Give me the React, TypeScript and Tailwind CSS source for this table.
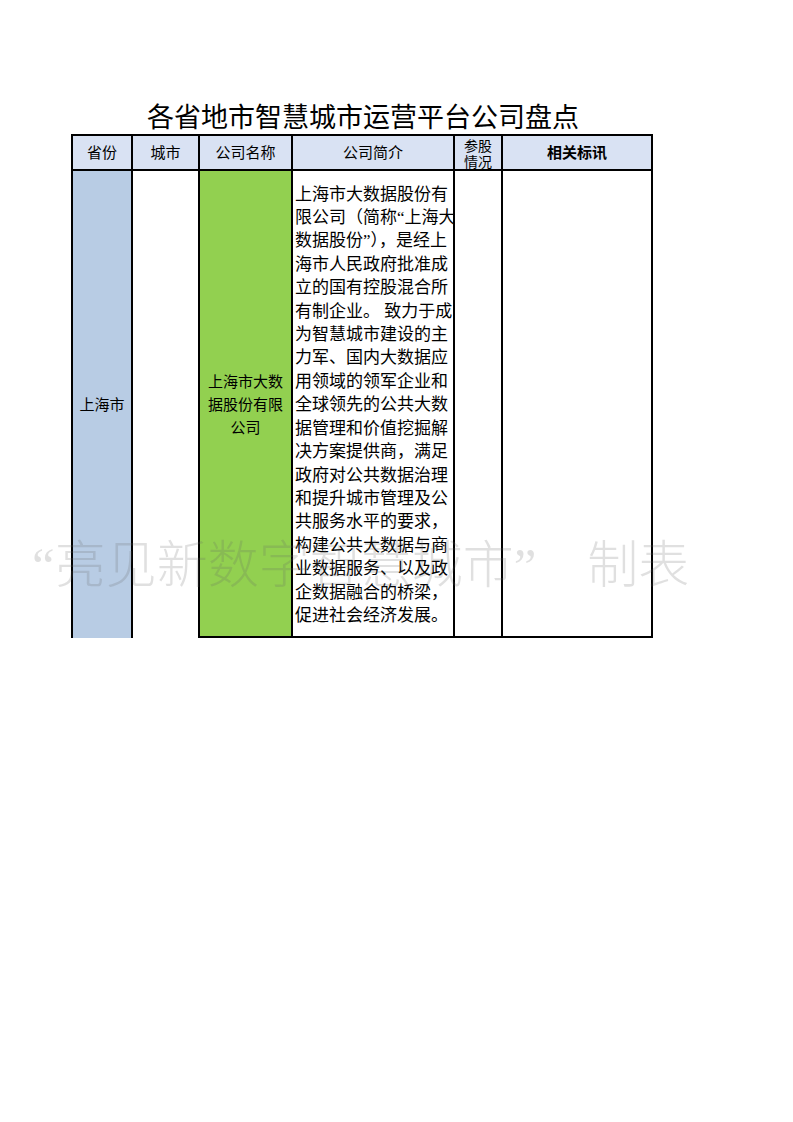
import React from "react";

const desc = [
  "上海市大数据股份有",
  "限公司（简称“上海大",
  "数据股份”），是经上",
  "海市人民政府批准成",
  "立的国有控股混合所",
  "有制企业。 致力于成",
  "为智慧城市建设的主",
  "力军、国内大数据应",
  "用领域的领军企业和",
  "全球领先的公共大数",
  "据管理和价值挖掘解",
  "决方案提供商，满足",
  "政府对公共数据治理",
  "和提升城市管理及公",
  "共服务水平的要求，",
  "构建公共大数据与商",
  "业数据服务、以及政",
  "企数据融合的桥梁，",
  "促进社会经济发展。",
];

export default function App() {
  return (
    <div className="relative w-[793px] h-[1122px] overflow-hidden bg-white text-black font-['Noto_Sans_CJK_SC',sans-serif]">
      <div className="pt-[98px] w-[582px] ml-[72px] h-[134px]">
        <div className="h-[36px] leading-[36px] text-center text-[27px]">
          各省地市智慧城市运营平台公司盘点
        </div>
      </div>

      <div className="ml-[71px] w-[582px] border-l-2 border-t-2 border-black grid grid-cols-[60px_67px_93px_162px_48px_150px]">
        {/* header */}
        <div className="h-[35px] border-r-2 border-b-2 border-black bg-[#d9e2f3] flex items-center justify-center text-[15px]">省份</div>
        <div className="h-[35px] border-r-2 border-b-2 border-black bg-[#d9e2f3] flex items-center justify-center text-[15px]">城市</div>
        <div className="h-[35px] border-r-2 border-b-2 border-black bg-[#d9e2f3] flex items-center justify-center text-[15px]">公司名称</div>
        <div className="h-[35px] border-r-2 border-b-2 border-black bg-[#d9e2f3] flex items-center justify-center text-[15px]">公司简介</div>
        <div className="h-[35px] border-r-2 border-b-2 border-black bg-[#d9e2f3] flex flex-col items-center justify-center text-[14px] leading-[16px]">
          <span>参股</span>
          <span>情况</span>
        </div>
        <div className="h-[35px] border-r-2 border-b-2 border-black bg-[#d9e2f3] flex items-center justify-center text-[15px] font-bold">相关标讯</div>

        {/* body */}
        <div className="h-[467px] border-r-2 border-black bg-[#b8cce4] flex items-center justify-center text-[15px]">上海市</div>
        <div className="h-[467px] border-r-2 border-black bg-white"></div>
        <div className="h-[467px] border-r-2 border-b-2 border-black bg-[#92d050] flex flex-col items-center justify-center text-[15px] leading-[23px]">
          <span>上海市大数</span>
          <span>据股份有限</span>
          <span>公司</span>
        </div>
        <div className="h-[467px] border-r-2 border-b-2 border-black bg-white flex flex-col justify-center pl-[2px] pt-[3px] text-[17px] leading-[23.4px] font-['Liberation_Serif','Noto_Sans_CJK_SC',serif] overflow-hidden">
          {desc.map((l, i) => (
            <span key={i} className="whitespace-pre">{l}</span>
          ))}
        </div>
        <div className="h-[467px] border-r-2 border-b-2 border-black bg-white"></div>
        <div className="h-[467px] border-r-2 border-b-2 border-black bg-white"></div>
      </div>

      {/* watermark overlay */}
      <div className="absolute left-[32px] top-[541px] pointer-events-none whitespace-pre text-[51px] leading-[51px] font-light text-[rgba(100,100,100,0.2)] font-['Liberation_Serif','Noto_Sans_CJK_SC',serif]">
        “亮见新数字智慧城市”　制表
      </div>
    </div>
  );
}
